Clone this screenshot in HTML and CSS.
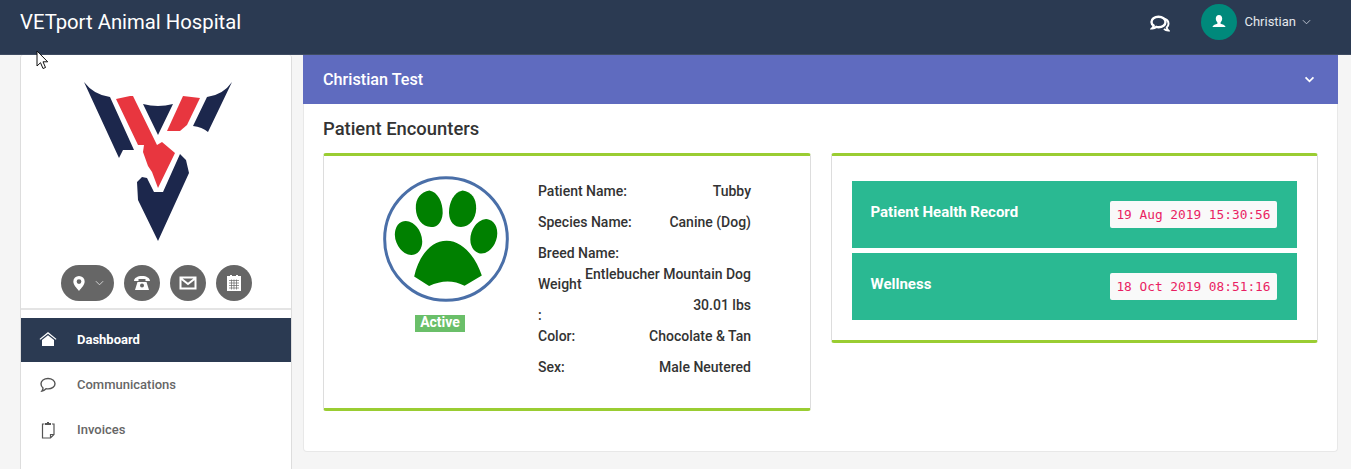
FILE: index.html
```html
<!DOCTYPE html>
<html>
<head>
    <title>VETport Animal Hospital</title>
    <link rel="stylesheet" href="styles.css">
</head>
<body>
    <header class="topbar">
        <div class="brand">VETport Animal Hospital</div>
        <div class="topbar-right">
            <svg class="chat-icon" viewBox="0 0 20 18" width="20" height="18">
                <path d="M13 3.500c3.200.5 5.500 2.500 5.500 5.200 0 1.500-.7 2.800-1.800 3.700.1 1.200.7 2.300 1.600 3.100-1.900 0-3.400-.7-4.300-1.600" fill="none" stroke="#fff" stroke-width="2"/>
                <path d="M8.500 1.800c4 0 7 2.300 7 5.200s-3 5.200-7 5.200c-.8 0-1.500-.1-2.200-.3-1 .9-2.500 1.500-4 1.500.8-.8 1.200-1.700 1.300-2.800C2.200 9.700 1.500 8.400 1.500 7c0-2.900 3-5.200 7-5.200z" fill="#2b3a52" stroke="#fff" stroke-width="2.400"/>
            </svg>
            <div class="user-menu">
                <span class="avatar">
                    <svg viewBox="0 0 16 16" width="16" height="16">
                        <path d="M8 1c2 0 3.200 1.500 3.200 3.600 0 1.600-.7 3-1.600 3.800v1.300c1.800.5 4.400 1.300 5 3.300H1.400c.6-2 3.200-2.800 5-3.300V8.400c-.9-.8-1.600-2.200-1.600-3.800C4.800 2.500 6 1 8 1z" fill="#fff"/>
                    </svg>
                </span>
                <span class="user-name">Christian</span>
                <svg class="caret" viewBox="0 0 10 6" width="9" height="6">
                    <path d="M1 1l4 4 4-4" fill="none" stroke="#c8ced8" stroke-width="1"/>
                </svg>
            </div>
        </div>
    </header>

    <svg class="cursor" viewBox="0 0 14 20" width="14" height="20">
        <path d="M1 1v15l3.500-3.300 2.500 5.800 2.500-1-2.500-5.700h4.700z" fill="#fff" stroke="#111" stroke-width="1"/>
    </svg>

    <div class="layout">
        <aside class="sidebar">
            <svg class="logo" viewBox="0 0 190 180" width="190" height="180">
                <g fill="#1c274c">
                    <path d="M24 12Q34 25 50 27L74 80 63 80 59 88z"/>
                    <path d="M83 34Q98 38 113 34L98 65z"/>
                    <path d="M172 12Q163 25 147 27L133 56Q142 57 148 62z"/>
                    <path d="M120 84L126 90 129 103 98 171 78 130 77 112 82 107 87 108 94 122H103z"/>
                </g>
                <g fill="#e8363f">
                    <path d="M56 29L70 26 73 26 97 75 102 72 115 83 98 118 92 102 88 96 83 82 84 75 78 75z"/>
                    <path d="M123 26L140 28 127 55 120 61 107 61z"/>
                </g>
            </svg>
            <div class="quick-actions">
                <button class="round-btn pill-btn">
                    <svg viewBox="0 0 14 18" width="14" height="17">
                        <path fill-rule="evenodd" d="M7 1a6 6 0 0 1 6 6c0 3.500-3.500 7-6 10-2.500-3-6-6.500-6-10a6 6 0 0 1 6-6zm0 3.500a2.500 2.500 0 1 0 0 5 2.500 2.500 0 0 0 0-5z" fill="#fff"/>
                    </svg>
                    <svg viewBox="0 0 10 6" width="9" height="6">
                        <path d="M1 1l4 4 4-4" fill="none" stroke="#ddd" stroke-width="1"/>
                    </svg>
                </button>
                <button class="round-btn">
                    <svg viewBox="0 0 18 16" width="18" height="16">
                        <path fill-rule="evenodd" d="M1 6c0-3 3.500-5 8-5s8 2 8 5H12.500V4h-7v2zM4.500 7h9L16 15H2zM9 8.500a2 2 0 1 0 0 4 2 2 0 0 0 0-4z" fill="#fff"/>
                    </svg>
                </button>
                <button class="round-btn">
                    <svg viewBox="0 0 18 14" width="18" height="14">
                        <path d="M1.500 1.500h15v11h-15zM2 2.500l7 5.500 7-5.500" fill="none" stroke="#fff" stroke-width="2"/>
                    </svg>
                </button>
                <button class="round-btn">
                    <svg viewBox="0 0 16 18" width="16" height="18">
                        <path d="M1 2h3V1h2v1h4V1h2v1h3v15H1z" fill="#fff"/>
                        <path d="M3 6.500h10M3 9h10M3 11.500h10M3 14h10M5.500 5.500v10M8 5.500v10M10.500 5.500v10" stroke="#666" stroke-width=".7"/>
                    </svg>
                </button>
            </div>
            <nav class="side-nav">
                <a class="nav-item active">
                    <svg viewBox="0 0 18 16" width="18" height="16">
                        <path d="M9 1L.5 8l.8.800L9 2.700l7.700 6.100.8-.8z" fill="#fff"/>
                        <path d="M3 9l6-4.800L15 9v6H3z" fill="#fff"/>
                    </svg>
                    <span>Dashboard</span>
                </a>
                <a class="nav-item">
                    <svg viewBox="0 0 18 16" width="18" height="16">
                        <path d="M9 1.500c4 0 7 2.300 7 5.200s-3 5.200-7 5.200c-.7 0-1.400-.1-2-.2-1 1-2.200 2-4 2.300.6-.8 1-1.700 1-3C2.900 10.100 2 8.500 2 6.700 2 3.800 5 1.500 9 1.500z" fill="none" stroke="#555" stroke-width="1.400"/>
                    </svg>
                    <span>Communications</span>
                </a>
                <a class="nav-item">
                    <svg viewBox="0 0 18 18" width="18" height="18">
                        <path d="M5.500 3H3.500v14h8l3.500-3.500V3h-2M11.500 17v-3.500H15" fill="none" stroke="#555" stroke-width="1.200"/>
                        <path d="M6 4V2h2V1h2v1h2v2z" fill="#555"/>
                    </svg>
                    <span>Invoices</span>
                </a>
            </nav>
        </aside>

        <main class="main-panel">
            <div class="patient-bar">
                <span>Christian Test</span>
                <svg viewBox="0 0 12 8" width="11" height="7">
                    <path d="M1.500 1.500L6 6l4.500-4.500" fill="none" stroke="#fff" stroke-width="2"/>
                </svg>
            </div>
            <div class="panel-body">
                <h2 class="panel-title">Patient Encounters</h2>
                <div class="card-row">
                    <section class="card patient-card">
                        <div class="patient-photo">
                            <svg class="paw" viewBox="0 0 380 380" width="126" height="126">
                                <circle cx="190" cy="190" r="185" fill="#fff" stroke="#4a6fa8" stroke-width="9"/>
                                <g fill="#008000">
                                    <path d="M140 44C165 48 181 80 180 112C178 142 162 154 145 154C118 152 100 130 99 98C98 68 114 48 140 44z"/>
                                    <path d="M240 44C268 48 281 68 281 98C280 130 262 152 235 154C216 154 200 140 199 110C199 80 214 48 240 44z"/>
                                    <ellipse cx="77" cy="187" rx="39" ry="53" transform="rotate(-22 77 187)"/>
                                    <ellipse cx="304" cy="182" rx="39" ry="53" transform="rotate(18 304 182)"/>
                                    <path d="M94 303C108 240 145 195 192 195C240 195 280 245 298 300L246 331Q195 305 139 332z"/>
                                </g>
                            </svg>
                            <span class="status-badge">Active</span>
                        </div>
                        <div class="patient-info">
                            <div class="info-row"><span>Patient Name:</span><span>Tubby</span></div>
                            <div class="info-row"><span>Species Name:</span><span>Canine (Dog)</span></div>
                            <div class="info-row breed-row"><span>Breed Name:</span></div>
                            <div class="info-row wrap-row">
                                <span class="wrap-label">Weight :</span>
                                <span class="wrap-values">
                                    <span>Entlebucher Mountain Dog</span>
                                    <span>30.01 lbs</span>
                                </span>
                            </div>
                            <div class="info-row"><span>Color:</span><span>Chocolate &amp; Tan</span></div>
                            <div class="info-row"><span>Sex:</span><span>Male Neutered</span></div>
                        </div>
                    </section>
                    <section class="card records-card">
                        <div class="record">
                            <span class="record-name">Patient Health Record</span>
                            <code class="record-date">19 Aug 2019 15:30:56</code>
                        </div>
                        <div class="record">
                            <span class="record-name">Wellness</span>
                            <code class="record-date">18 Oct 2019 08:51:16</code>
                        </div>
                    </section>
                </div>
            </div>
        </main>
    </div>
</body>
</html>
```

FILE: styles.css
```css
* {
    box-sizing: border-box;
}

html, body {
    height: 469px;
    overflow: hidden;
}

body {
    margin: 0;
    font-family: 'Roboto', 'Liberation Sans', sans-serif;
    background-color: #f5f5f5;
    color: #333;
}

.topbar {
    height: 55px;
    background: #2b3a52;
    border-bottom: 1px solid #3f4c62;
    display: flex;
    justify-content: space-between;
    padding: 0 40px 0 20px;
}

.brand {
    color: #fff;
    font-size: 20.3px;
    line-height: 44px;
}

.topbar-right {
    display: flex;
    align-items: flex-start;
    gap: 31px;
}

.chat-icon {
    margin-top: 15px;
}

.user-menu {
    display: flex;
    align-items: center;
    height: 36px;
    margin-top: 4px;
    color: #e4e7ec;
    font-size: 13px;
}

.avatar {
    width: 36px;
    height: 36px;
    border-radius: 50%;
    background: #00897b;
    display: flex;
    align-items: center;
    justify-content: center;
    margin-right: 7px;
}

.user-name {
    margin-right: 6px;
    padding-bottom: 1px;
}

.cursor {
    position: absolute;
    left: 36px;
    top: 50px;
}

.layout {
    display: flex;
    gap: 11px;
    padding: 0 13px 0 20px;
}

.sidebar {
    width: 272px;
    height: 430px;
    flex-shrink: 0;
    background: #fff;
    border: 1px solid #ddd;
    border-top: none;
    border-radius: 3px 3px 0 0;
    padding-top: 15px;
}

.logo {
    display: block;
    margin-left: 39px;
}

.quick-actions {
    display: flex;
    justify-content: center;
    gap: 10px;
    margin-top: 15px;
    padding: 0 0 7px 1px;
    border-bottom: 2px solid #e4e4e4;
}

.round-btn {
    width: 36px;
    height: 36px;
    border: none;
    border-radius: 18px;
    padding: 0;
    background: #666;
    display: flex;
    align-items: center;
    justify-content: center;
}

.pill-btn {
    width: 53px;
    gap: 9px;
}

.side-nav {
    margin-top: 8px;
}

.nav-item {
    display: flex;
    align-items: center;
    height: 45px;
    padding-left: 18px;
    color: #666;
    font-size: 13px;
    font-weight: 500;
}

.nav-item svg {
    flex-shrink: 0;
    margin-right: 20px;
}

.nav-item.active {
    height: 44px;
    padding-bottom: 2px;
    background: #2b3a52;
    color: #fff;
    font-weight: 700;
}

.main-panel {
    flex: 1;
    height: 397px;
    background: #fff;
    border: 1px solid #e8e8e8;
    border-top: none;
    border-radius: 0 0 4px 4px;
}

.patient-bar {
    height: 49px;
    margin: 0 -1px;
    padding: 0 23px 0 20px;
    background: #5f6bbf;
    color: #fff;
    font-size: 16.2px;
    font-weight: 500;
    display: flex;
    align-items: center;
    justify-content: space-between;
}

.panel-body {
    padding: 0 19px;
}

.panel-title {
    margin: 0;
    font-size: 18.4px;
    font-weight: 500;
    line-height: 49px;
}

.card-row {
    display: grid;
    grid-template-columns: 1fr 1fr;
    align-items: start;
    gap: 20px;
}

.card {
    background: #fff;
    border: 1px solid #ddd;
    border-top: 3px solid #9acd32;
    border-bottom: 3px solid #9acd32;
    border-radius: 3px;
}

.patient-card {
    height: 258px;
    display: flex;
    padding-top: 20px;
}

.patient-photo {
    width: 214px;
    flex-shrink: 0;
    padding-left: 59px;
}

.paw {
    display: block;
}

.status-badge {
    display: block;
    width: 50px;
    height: 17px;
    margin: 13px 0 0 32px;
    background: #6abf69;
    color: #fff;
    font-size: 14px;
    font-weight: 700;
    line-height: 15px;
    text-align: center;
}

.patient-info {
    width: 213px;
    font-size: 14px;
    font-weight: 500;
    line-height: 31px;
}

.info-row {
    display: flex;
    justify-content: space-between;
}

.breed-row {
    height: 21px;
}

.wrap-row {
    height: 62px;
}

.wrap-label {
    width: 40px;
    margin-top: 10px;
}

.wrap-values {
    text-align: right;
}

.wrap-values span {
    display: block;
}

.records-card {
    padding: 25px 20px 20px;
}

.record {
    height: 67px;
    padding: 20px 20px 0 19px;
    background: #2ab992;
    display: flex;
    justify-content: space-between;
    align-items: flex-start;
    color: #fff;
}

.record + .record {
    margin-top: 5px;
}

.record-name {
    font-size: 15px;
    font-weight: 700;
    line-height: 22px;
}

.record-date {
    height: 27px;
    padding: 0 6.5px;
    background: #f9f9f9;
    border-radius: 2px;
    color: #e91e63;
    font-family: 'DejaVu Sans Mono', monospace;
    font-size: 12.8px;
    line-height: 27px;
}
```
